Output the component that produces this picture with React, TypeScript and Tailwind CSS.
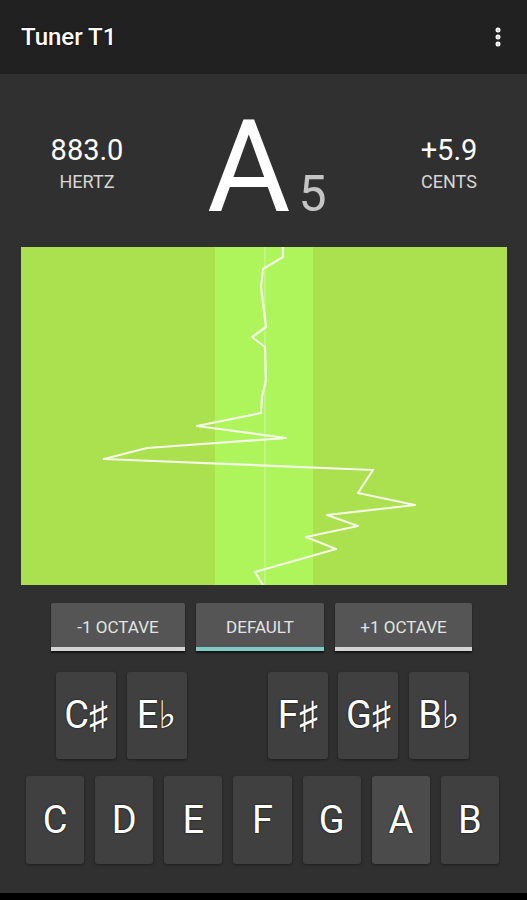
import { EllipsisVertical } from "lucide-react"

const wave =
  "262,0 262,10 242,22 240,40 245,80 231,90 244,100 245,133 241,150 240,166 176,179 265,191 126,201 83,212 352,223 337,246 394,258 306,268 337,279 285,290 315,302 234,325 242,338"

const sharps = ["C♯", "E♭", "", "F♯", "G♯", "B♭"]
const naturals = ["C", "D", "E", "F", "G", "A", "B"]

function Readout({ value, label }: { value: string; label: string }) {
  return (
    <div className="flex flex-col items-center pt-[62px]">
      <div className="text-[29px] leading-[29px] text-white">{value}</div>
      <div className="mt-[8px] text-[18px] leading-[18px] text-[#d6d6d6]">{label}</div>
    </div>
  )
}

export default function App() {
  return (
    <div
      className="flex min-h-[900px] w-full flex-col bg-[#303030] text-white"
      style={{ fontFamily: "Roboto, 'Liberation Sans', 'DejaVu Sans', sans-serif" }}
    >
      <header className="flex h-[74px] items-center justify-between bg-[#212121] pl-[21px] pr-[17px]">
        <h1 className="text-[24px] font-medium [text-shadow:0_0_2px_#000]">Tuner T1</h1>
        <EllipsisVertical className="h-6 w-6" strokeWidth={3} />
      </header>

      <section className="flex h-[173px]">
        <div className="w-[174px]">
          <Readout value="883.0" label="HERTZ" />
        </div>
        <div className="flex w-[197px] items-baseline pl-[33px] pt-[29px]">
          <span className="text-[128px] leading-[128px]">A</span>
          <span className="ml-[8px] text-[50px] leading-[50px] text-[#c4c4c4]">5</span>
        </div>
        <div className="flex-1">
          <Readout value="+5.9" label="CENTS" />
        </div>
      </section>

      <div className="mx-[21px] h-[338px]">
        <svg width="486" height="338" viewBox="0 0 486 338" className="block">
          <rect width="486" height="338" fill="#abe04f" />
          <rect x="194" width="98" height="338" fill="#aef45b" />
          <rect x="243" width="2" height="338" fill="#c2f77e" />
          <polyline points={wave} fill="none" stroke="#f4fbe6" strokeWidth="2.2" strokeLinejoin="round" />
        </svg>
      </div>

      <div className="mt-[18px] flex gap-[11px] pl-[51px]">
        {[
          { t: "-1 OCTAVE", w: "w-[134px]", line: "border-[#d4d4d4]" },
          { t: "DEFAULT", w: "w-[128px]", line: "border-[#80cbc4]" },
          { t: "+1 OCTAVE", w: "w-[137px]", line: "border-[#d4d4d4]" },
        ].map((b) => (
          <div
            key={b.t}
            className={`${b.w} ${b.line} flex h-[48px] items-center justify-center rounded-t-[2px] border-b-4 bg-[#555555] pt-[5px] text-[17px] text-[#e4e4e4] shadow-[0_2px_2px_rgba(0,0,0,0.6)]`}
          >
            {b.t}
          </div>
        ))}
      </div>

      <div className="mt-[21px] flex gap-[10.6px] pl-[56px]">
        {sharps.map((n, i) =>
          n ? (
            <div
              key={i}
              className="flex h-[87px] w-[60px] items-center justify-center rounded-[3px] bg-[#404040] text-[38px] [text-shadow:0_0_2px_#000] shadow-[0_1px_3px_rgba(0,0,0,0.4)]"
            >
              {n}
            </div>
          ) : (
            <div key={i} className="w-[60px]" />
          )
        )}
      </div>

      <div className="mt-[17px] ml-[26px] grid w-[473px] grid-cols-7 gap-[11px]">
        {naturals.map((n) => (
          <div
            key={n}
            className={`${n === "A" ? "bg-[#4b4b4b]" : "bg-[#404040]"} flex h-[88px] items-center justify-center rounded-[3px] text-[38px] [text-shadow:0_0_2px_#000] shadow-[0_1px_3px_rgba(0,0,0,0.4)]`}
          >
            {n}
          </div>
        ))}
      </div>

      <div className="mt-auto h-[7px] bg-black" />
    </div>
  )
}
